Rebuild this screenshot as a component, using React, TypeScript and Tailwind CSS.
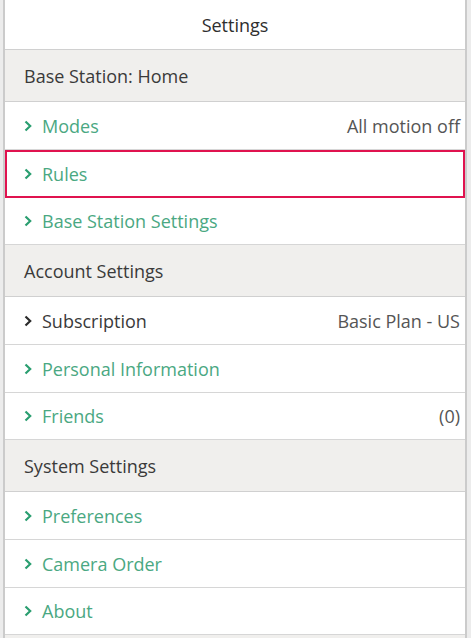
import React from 'react';

type Row = {
    label: string;
    value?: string;
    dark?: boolean;
    selected?: boolean;
};

type Section = {
    title: string;
    rows: Row[];
};

const sections: Section[] = [
    {
        title: 'Base Station: Home',
        rows: [
            { label: 'Modes', value: 'All motion off' },
            { label: 'Rules', selected: true },
            { label: 'Base Station Settings' },
        ],
    },
    {
        title: 'Account Settings',
        rows: [
            { label: 'Subscription', value: 'Basic Plan - US', dark: true },
            { label: 'Personal Information' },
            { label: 'Friends', value: '(0)' },
        ],
    },
    {
        title: 'System Settings',
        rows: [
            { label: 'Preferences' },
            { label: 'Camera Order' },
            { label: 'About' },
        ],
    },
];

const Chevron: React.FC<{ dark?: boolean }> = ({ dark }) => (
    <svg width="8" height="12" viewBox="0 0 8 12" className="shrink-0">
        <path
            d="M1.5 1.5 L6.2 6 L1.5 10.5"
            fill="none"
            stroke={dark ? '#2b2b2b' : '#2a9e70'}
            strokeWidth="2.2"
            strokeLinejoin="miter"
        />
    </svg>
);

const SettingsRow: React.FC<{ row: Row; last?: boolean }> = ({ row, last }) => (
    <div
        className={`${last ? 'h-[47px]' : 'h-[48px]'} flex items-center justify-between pl-[19px] pr-[5px] border-b border-[#d6d6d6] ${
            row.selected ? 'outline-2 outline-[#e0134f] -outline-offset-2' : ''
        }`}
    >
        <div className="flex items-center gap-[10px]">
            <Chevron dark={row.dark} />
            <span className={row.dark ? 'text-[#3a3a3a]' : 'text-[#4aa882]'}>{row.label}</span>
        </div>
        {row.value && <span className="text-[#555555]">{row.value}</span>}
    </div>
);

export default function App() {
    return (
        <div
            className="w-[471px] h-[638px] overflow-hidden bg-[#ececec] flex text-[18px] leading-none"
            style={{ fontFamily: '"Open Sans", "Noto Sans", sans-serif' }}
        >
            <div className="w-[467px] shrink-0 pl-[3px]">
                <div className="h-full bg-white border-x-2 border-[#cbcbcb]">
                    <div className="h-[50px] flex items-center justify-center text-[#2e2e2e] border-b border-[#d0d0d0]">
                        Settings
                    </div>
                    {sections.map((section) => (
                        <div key={section.title}>
                            <div className="h-[52px] flex items-center pl-[19px] bg-[#f0efed] text-[#3a3a3a] border-b border-[#d0d0d0]">
                                {section.title}
                            </div>
                            {section.rows.map((row, i) => (
                                <SettingsRow key={row.label} row={row} last={i === section.rows.length - 1} />
                            ))}
                        </div>
                    ))}
                    <div className="h-[6px] bg-[#f0efed]" />
                </div>
            </div>
        </div>
    );
}
